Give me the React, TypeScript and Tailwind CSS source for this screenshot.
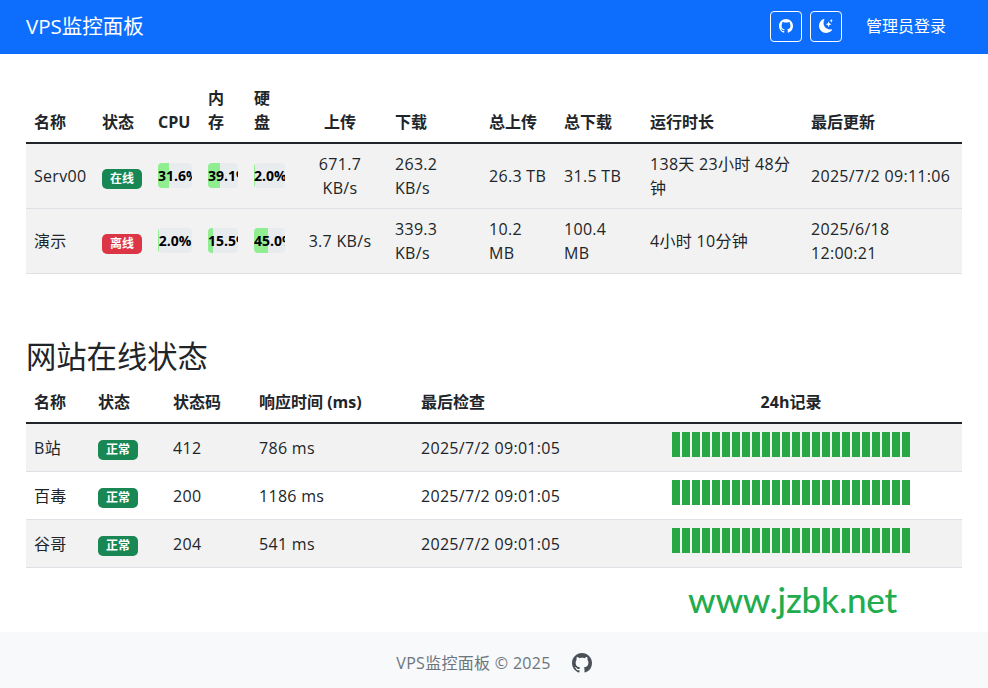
import { BsGithub, BsMoonStarsFill } from "react-icons/bs";

function Bar({ v, w }: { v: number; w: string }) {
  return (
    <div className={`relative h-[25px] overflow-hidden rounded bg-[#e9ecef] ${w}`}>
      <div className="absolute inset-y-0 left-0 bg-[#90ee90]" style={{ width: `${v}%` }} />
      <div className="absolute inset-0 flex items-center justify-center-safe whitespace-nowrap text-[14px] font-bold leading-none tracking-normal text-black">
        {v.toFixed(1)}%
      </div>
    </div>
  );
}

function Badge({ text, color }: { text: string; color: string }) {
  return (
    <span className={`inline-block w-[40px] whitespace-nowrap rounded-[5px] py-[4px] text-center align-middle text-[12px] font-bold leading-none tracking-normal text-white ${color}`}>
      {text}
    </span>
  );
}

const servers = [
  { name: "Serv00", st: "在线", c: "bg-[#198754]", cpu: 31.6, mem: 39.1, disk: 2.0, up: "671.7 KB/s", down: "263.2 KB/s", tu: "26.3 TB", td: "31.5 TB", time: "138天 23小时 48分钟", last: "2025/7/2 09:11:06", bg: "bg-[#f2f2f2]" },
  { name: "演示", st: "离线", c: "bg-[#dc3545]", cpu: 2.0, mem: 15.5, disk: 45.0, up: "3.7 KB/s", down: "339.3 KB/s", tu: "10.2 MB", td: "100.4 MB", time: "4小时 10分钟", last: "2025/6/18 12:00:21", bg: "bg-[#f2f2f2]" },
];

const sites = [
  { name: "B站", code: "412", ms: "786 ms", bg: "bg-[#f2f2f2]" },
  { name: "百毒", code: "200", ms: "1186 ms", bg: "bg-white" },
  { name: "谷哥", code: "204", ms: "541 ms", bg: "bg-[#f2f2f2]" },
];

const th = "border-b-2 border-[#212529] px-2 pb-[8px] pt-2 text-left align-bottom font-bold";
const td = "border-b border-[#dee2e6] px-2 align-middle tracking-[0.3px]";
const tdText = `${td} pt-[2px]`;
const tdBadge = `${td} pt-[4px]`;
const tdBadgeSite = `${td} pt-[3px]`;

export default function App() {
  return (
    <div className="flex h-[688px] w-[988px] flex-col overflow-hidden bg-white font-['Open_Sans','Noto_Sans_CJK_SC',sans-serif] text-[16px] leading-[24px] text-[#212529]">
      <nav className="flex h-[54px] shrink-0 items-center bg-[#0d6efd] pb-[2px] pl-[26px] pr-[42px] text-white">
        <div className="text-[20.5px]">VPS监控面板</div>
        <div className="ml-auto flex items-center">
          <div className="flex h-[31px] w-[32px] items-center justify-center rounded border border-white text-[14px]">
            <BsGithub />
          </div>
          <div className="ml-2 flex h-[31px] w-[32px] items-center justify-center rounded border border-white text-[14px]">
            <BsMoonStarsFill />
          </div>
          <div className="ml-6 text-[16px]">管理员登录</div>
        </div>
      </nav>

      <main className="relative flex-1 px-[26px] pt-[24px]">
        <table className="w-[936px] table-fixed border-collapse">
          <thead>
            <tr>
              <th className={`${th} w-[68px]`}>名称</th>
              <th className={`${th} w-[56px]`}>状态</th>
              <th className={`${th} w-[50px]`}>CPU</th>
              <th className={`${th} w-[46px]`}>内存</th>
              <th className={`${th} w-[47px]`}>硬盘</th>
              <th className={`${th} w-[94px] !text-center`}>上传</th>
              <th className={`${th} w-[94px]`}>下载</th>
              <th className={`${th} w-[75px]`}>总上传</th>
              <th className={`${th} w-[86px]`}>总下载</th>
              <th className={`${th} w-[161px]`}>运行时长</th>
              <th className={`${th} w-[159px]`}>最后更新</th>
            </tr>
          </thead>
          <tbody>
            {servers.map((s) => (
              <tr key={s.name} className={`h-[65px] ${s.bg}`}>
                <td className={td}>{s.name}</td>
                <td className={tdBadge}><Badge text={s.st} color={s.c} /></td>
                <td className={td}><Bar v={s.cpu} w="w-[34px]" /></td>
                <td className={td}><Bar v={s.mem} w="w-[30px]" /></td>
                <td className={td}><Bar v={s.disk} w="w-[31px]" /></td>
                <td className={`${td} text-center`}>{s.up}</td>
                <td className={td}>{s.down}</td>
                <td className={td}>{s.tu}</td>
                <td className={td}>{s.td}</td>
                <td className={td}>{s.time}</td>
                <td className={td}>{s.last}</td>
              </tr>
            ))}
          </tbody>
        </table>

        <h2 className="mb-[7px] mt-[65px] text-[30.3px] font-normal leading-[36px]">网站在线状态</h2>

        <table className="w-[936px] table-fixed border-separate border-spacing-0">
          <thead>
            <tr>
              <th className={`${th} w-[64px]`}>名称</th>
              <th className={`${th} w-[75px]`}>状态</th>
              <th className={`${th} w-[86px]`}>状态码</th>
              <th className={`${th} w-[162px]`}>响应时间 (ms)</th>
              <th className={`${th} w-[207px]`}>最后检查</th>
              <th className={`${th} !text-center`}>24h记录</th>
            </tr>
          </thead>
          <tbody>
            {sites.map((s) => (
              <tr key={s.name} className={`h-[48px] ${s.bg}`}>
                <td className={tdText}>{s.name}</td>
                <td className={tdBadgeSite}><Badge text="正常" color="bg-[#198754]" /></td>
                <td className={tdText}>{s.code}</td>
                <td className={tdText}>{s.ms}</td>
                <td className={tdText}>2025/7/2 09:01:05</td>
                <td className={td}>
                  <div className="mb-[6px] flex justify-center gap-[2px]">
                    {Array.from({ length: 24 }).map((_, i) => (
                      <div key={i} className="h-[25px] w-[8px] bg-[#28a745]" />
                    ))}
                  </div>
                </td>
              </tr>
            ))}
          </tbody>
        </table>

        <div className="absolute left-[688px] top-[525px] font-['Lato',sans-serif] text-[35px] font-medium leading-[40px] tracking-[-0.2px] text-[#22ac4e]">
          www.jzbk.net
        </div>
      </main>

      <footer className="flex h-[56px] shrink-0 items-center justify-center bg-[#f8f9fa] pt-[6px] tracking-[0.3px] text-[#6c757d]">
        <span>VPS监控面板 © 2025</span>
        <BsGithub className="ml-[21px] text-[20px] text-[#495057]" />
      </footer>
    </div>
  );
}
